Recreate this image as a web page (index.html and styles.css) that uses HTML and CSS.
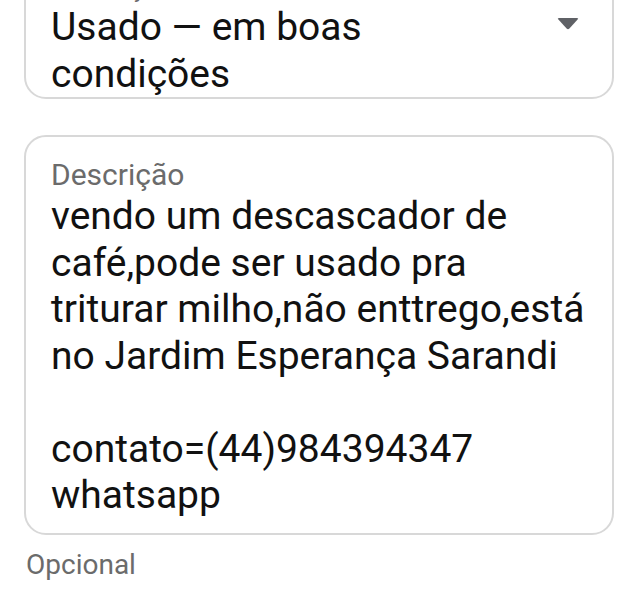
FILE: index.html
```html
<!doctype html>
<html lang="pt">
<head>
    <title>Anúncio</title>
    <meta charset="utf-8" />
    <meta name="viewport" content="width=device-width, initial-scale=1.0" />
    <link rel="stylesheet" href="styles.css">
</head>
<body>
    <div class="form">
        <!-- Condição (select) -->
        <div class="field field-select">
            <div class="field-label">Condição</div>
            <div class="field-value">Usado — em boas<br>condições</div>
            <svg class="arrow" width="24" height="16" viewBox="0 0 24 16">
                <path d="M3 2 H21 Q23 2 21.6 3.6 L13.4 12.6 Q12 14 10.6 12.6 L2.4 3.6 Q1 2 3 2 Z" fill="#5f6166"/>
            </svg>
        </div>

        <!-- Descrição -->
        <div class="field field-text">
            <div class="field-label">Descrição</div>
            <div class="field-value">vendo um descascador de<br>café,pode ser usado pra<br>triturar milho,não enttrego,está<br>no Jardim Esperança Sarandi<br><br>contato=(44)984394347<br>whatsapp</div>
        </div>
        <div class="helper">Opcional</div>
    </div>
</body>
</html>
```

FILE: styles.css
```css
body {
    margin: 0;
    height: 100vh;
    overflow: hidden;
    background-color: #fff;
    font-family: 'Roboto', 'Noto Sans', sans-serif;
    color: #111;
}

.form {
    padding: 0 26px 0 24px;
    margin-top: -55px;
}

/* Outlined fields */
.field {
    position: relative;
    border: 2px solid #d8d8d8;
    border-radius: 22px;
    padding: 21px 20px 14px 25px;
}

.field-select {
    padding-bottom: 0;
}

.field-text {
    margin-top: 36px;
    padding-top: 20px;
}

.field-label {
    font-size: 30px;
    line-height: 36px;
    color: #6b6b6b;
}

.field-value {
    font-size: 39px;
    line-height: 46.5px;
    color: #111;
}

.arrow {
    position: absolute;
    right: 32px;
    top: 69px;
}

.helper {
    font-size: 28px;
    line-height: 34px;
    color: #6b6b6b;
    margin: 13px 0 0 2px;
}
```
